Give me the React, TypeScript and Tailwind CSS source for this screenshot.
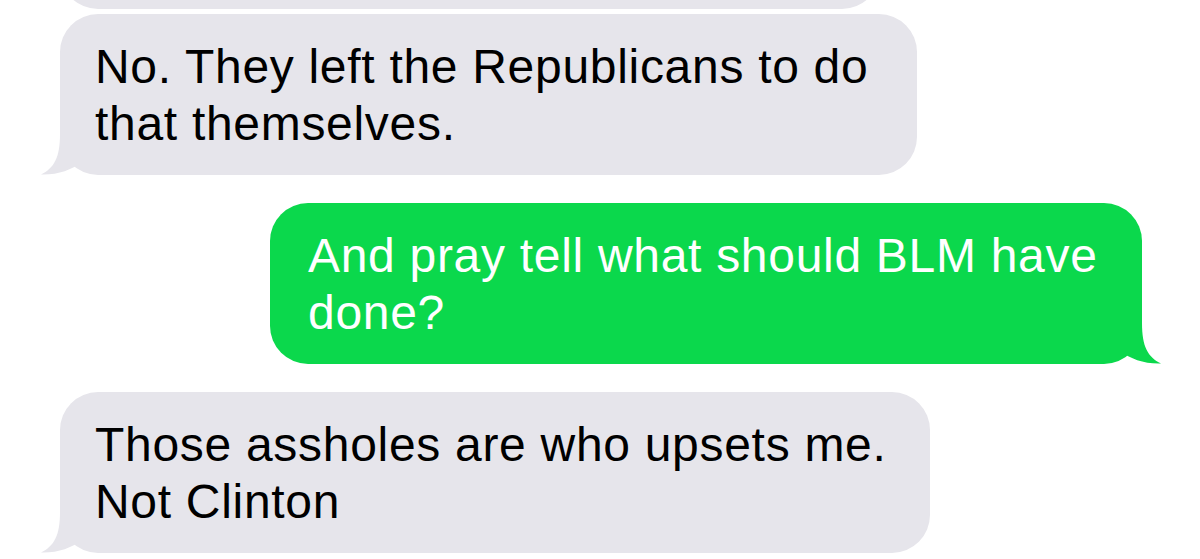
import React from 'react';

const GRAY = '#e6e5eb';
const GREEN = '#0bd84c';

// little curled tail at the bottom corner of a bubble
const Tail = ({ side, color }: { side: 'left' | 'right'; color: string }) => (
    <svg
        width="50"
        height="45"
        viewBox="0 0 50 45"
        className={side === 'left' ? 'absolute bottom-0 -left-[22px]' : 'absolute bottom-0 -right-[22px] -scale-x-100'}
    >
        <path d="M22 4 C22 28 16 38 3 44.5 C20 45 33 40 44 32 L44 4 Z" fill={color} />
    </svg>
);

const Bubble = ({
    lines,
    sent = false,
    tail = true,
    className = '',
}: {
    lines: string[];
    sent?: boolean;
    tail?: boolean;
    className?: string;
}) => (
    <div
        className={`relative rounded-[38px] pt-[24px] pb-[23px] text-[48px] leading-[57px] tracking-[0.7px] whitespace-nowrap ${
            sent ? 'bg-[#0bd84c] text-white pl-[38px]' : 'bg-[#e6e5eb] text-black pl-[35px]'
        } ${className}`}
    >
        {tail && <Tail side={sent ? 'right' : 'left'} color={sent ? GREEN : GRAY} />}
        <span className="relative">
            {lines.map((l, i) => (
                <React.Fragment key={i}>
                    {l}
                    {i < lines.length - 1 && <br />}
                </React.Fragment>
            ))}
        </span>
    </div>
);

export default function App() {
    return (
        <div
            className="w-[1200px] h-[559px] bg-white overflow-hidden flex flex-col"
            style={{ fontFamily: '"Liberation Sans", Arial, sans-serif' }}
        >
            {/* previous message, mostly scrolled off */}
            <div className="-mt-[71px] ml-[60px] w-[820px] h-[80px] rounded-[38px] bg-[#e6e5eb] shrink-0" />

            <Bubble
                className="mt-[5px] ml-[60px] w-[857px]"
                lines={['No. They left the Republicans to do', 'that themselves.']}
            />

            <Bubble
                sent
                className="mt-[28px] ml-[270px] w-[872px]"
                lines={['And pray tell what should BLM have', 'done?']}
            />

            <Bubble
                className="mt-[28px] ml-[60px] w-[870px]"
                lines={['Those assholes are who upsets me.', 'Not Clinton']}
            />
        </div>
    );
}
